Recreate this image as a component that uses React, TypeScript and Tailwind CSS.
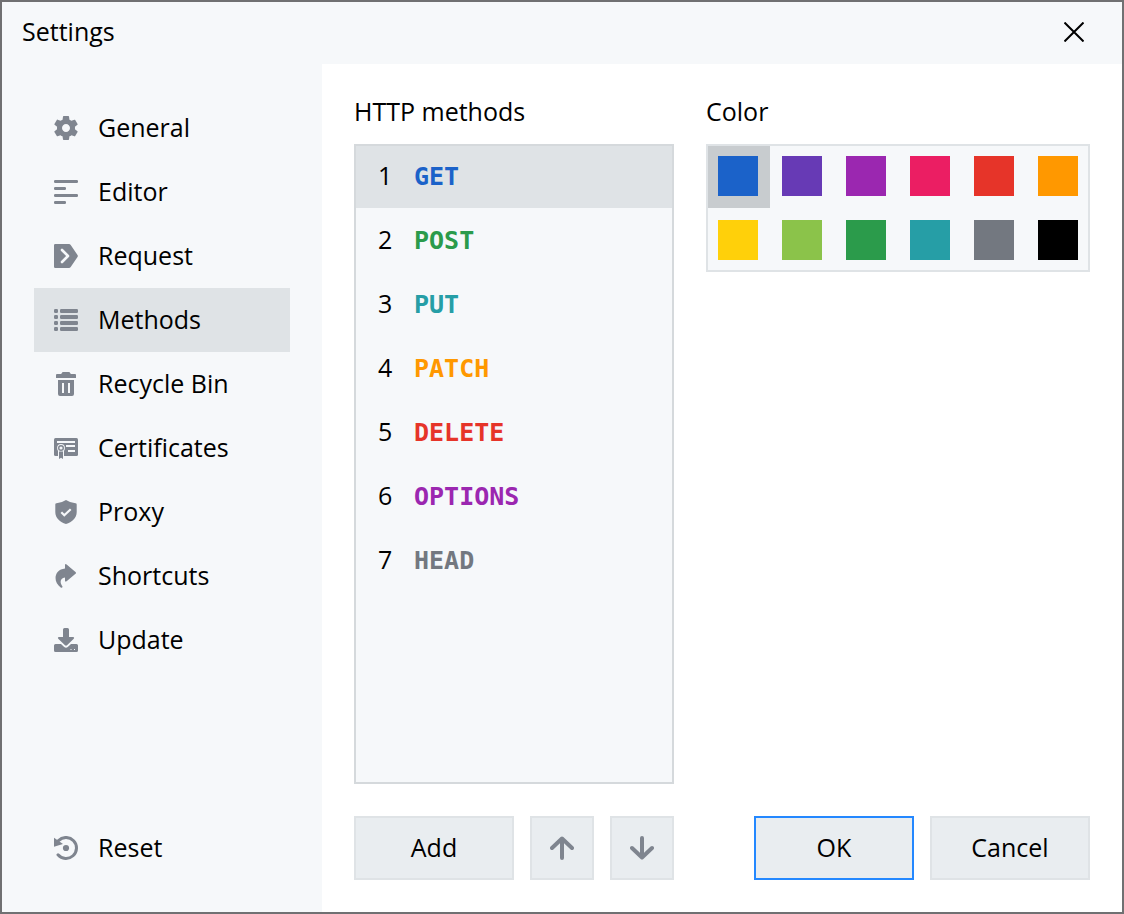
import { useState } from "react";
import type { ReactNode } from "react";

function Icon({ children }: { children: ReactNode }) {
  return (
    <svg aria-hidden="true" viewBox="0 0 24 24" className="size-6 shrink-0 text-[#7f858f]" fill="currentColor">
      {children}
    </svg>
  );
}

const icons: Record<string, ReactNode> = {
  General: (
    <g transform="scale(1.25) translate(-2.4 -2.4)">
      <path d="M19.14,12.94c0.04-0.3,0.06-0.61,0.06-0.94c0-0.32-0.02-0.64-0.07-0.94l2.03-1.58c0.18-0.14,0.23-0.41,0.12-0.61l-1.92-3.32c-0.12-0.22-0.37-0.29-0.59-0.22l-2.39,0.96c-0.5-0.38-1.03-0.7-1.62-0.94L14.4,2.81c-0.04-0.24-0.24-0.41-0.48-0.41h-3.84c-0.24,0-0.43,0.17-0.47,0.41L9.25,5.35C8.66,5.59,8.12,5.92,7.63,6.29L5.24,5.33c-0.22-0.08-0.47,0-0.59,0.22L2.74,8.87C2.62,9.08,2.66,9.34,2.86,9.48l2.03,1.58C4.84,11.36,4.8,11.69,4.8,12s0.02,0.64,0.07,0.94l-2.03,1.58c-0.18,0.14-0.23,0.41-0.12,0.61l1.92,3.32c0.12,0.22,0.37,0.29,0.59,0.22l2.39-0.96c0.5,0.38,1.03,0.7,1.62,0.94l0.36,2.54c0.05,0.24,0.24,0.41,0.48,0.41h3.84c0.24,0,0.44-0.17,0.47-0.41l0.36-2.54c0.59-0.24,1.13-0.56,1.62-0.94l2.39,0.96c0.22,0.08,0.47,0,0.59-0.22l1.92-3.32c0.12-0.22,0.07-0.47-0.12-0.61L19.14,12.94z M12,15.2c-1.77,0-3.2-1.43-3.2-3.2s1.43-3.2,3.2-3.2s3.2,1.43,3.2,3.2S13.77,15.2,12,15.2z" />
    </g>
  ),
  Editor: (
    <>
      <rect width="24" height="3" rx="1.2" />
      <rect y="7" width="12" height="3" rx="1.2" />
      <rect y="14" width="24" height="3" rx="1.2" />
      <rect y="21" width="12" height="3" rx="1.2" />
    </>
  ),
  Request: (
    <>
      <path d="M1.2 0H15q1 0 1.7.9L23.5 11q.7 1 0 2L16.7 23.1q-.7.9-1.7.9H1.2Q0 24 0 22.8V1.2Q0 0 1.2 0Z" />
      <path d="M8 6l6 6-6 6" fill="none" stroke="#f6f8fa" strokeWidth="2.6" strokeLinecap="round" strokeLinejoin="round" />
    </>
  ),
  Methods: (
    <>
      {[1, 7, 13, 19].map((y) => (
        <g key={y}>
          <rect y={y} width="4" height="4" rx="1.2" />
          <rect x="6" y={y} width="18" height="4" rx="1.2" />
        </g>
      ))}
    </>
  ),
  "Recycle Bin": (
    <path
      fillRule="evenodd"
      d="M9 0h6q1 0 1 1l1 1h4q1 0 1 1v3H2V3q0-1 1-1h4l1-1q0-1 1-1ZM4 8h16v14q0 2-2 2H6q-2 0-2-2ZM8 11v10h2V11ZM14 11v10h2V11Z"
    />
  ),
  Certificates: (
    <>
      <path d="M1.5 2h21Q24 2 24 3.5v15q0 1.5-1.500 1.500H1.500Q0 20 0 18.500v-15Q0 2 1.500 2Z" />
      <path d="M3 6h18M12 10h9M14 15h7" fill="none" stroke="#f6f8fa" strokeWidth="2" />
      <path d="M4 15h6v8H4Z" fill="#f6f8fa" />
      <circle cx="7" cy="12" r="3.900" fill="#f6f8fa" />
      <circle cx="7" cy="12" r="2.300" fill="none" stroke="currentColor" strokeWidth="1.400" />
      <path d="M5 15.500h4V23l-2-1.300L5 23Z" />
    </>
  ),
  Proxy: (
    <>
      <path d="M12 0q4.500 3 9.500 3.200 1.200.1 1.200 1.300V12c0 6-4.700 10-10.700 12C6 22 1.300 18 1.300 12V4.500q0-1.200 1.200-1.300Q7.500 3 12 0Z" />
      <path d="M7.300 12.300l3 3 6.400-6" fill="none" stroke="#f6f8fa" strokeWidth="2.200" />
    </>
  ),
  Shortcuts: (
    <path d="M11 0.500q.7-.8 1.600 0L21.500 8q1 1 0 1.800l-8.900 7.400q-1.600.9-1.600-.5V13.500C6 14 5.500 18.500 8.500 22.500q0 1.500-1.500 1.200C-1.500 18 0 5.500 11 4.500Z" />
  ),
  Update: (
    <>
      <path d="M9 1.500Q9 0 10.500 0h3Q15 0 15 1.500V9h4q2 .3.500 2L13 17.300q-1 .8-2 0L4.500 11Q3 9.300 5 9h4Z" />
      <path
        fillRule="evenodd"
        d="M1.500 16H7l3.200 3q1.800 1.500 3.600 0L17 16h5.500q1.500 0 1.500 1.500v5q0 1.500-1.500 1.500h-21Q0 24 0 22.500v-5Q0 16 1.500 16ZM16.500 21v1h1v-1ZM20 21v1h1v-1Z"
      />
    </>
  ),
  Reset: (
    <>
      <path d="M4.500 4.600A10.500 10.500 0 1 1 4 18.800" fill="none" stroke="currentColor" strokeWidth="3" strokeLinecap="round" />
      <path d="M0 1.800V10.800L9 8Z" />
      <circle cx="12" cy="12" r="3.100" />
    </>
  ),
};

const pages = ["General", "Editor", "Request", "Methods", "Recycle Bin", "Certificates", "Proxy", "Shortcuts", "Update"];

const methods = [
  { name: "GET", color: "text-[#1b62c9]" },
  { name: "POST", color: "text-[#2b9b4b]" },
  { name: "PUT", color: "text-[#269ea6]" },
  { name: "PATCH", color: "text-[#ff9800]" },
  { name: "DELETE", color: "text-[#e63429]" },
  { name: "OPTIONS", color: "text-[#9b27b0]" },
  { name: "HEAD", color: "text-[#737880]" },
];

const swatches = [
  { label: "Blue", color: "bg-[#1b62c9]" },
  { label: "Violet", color: "bg-[#673ab5]" },
  { label: "Purple", color: "bg-[#9b27b0]" },
  { label: "Pink", color: "bg-[#eb1e63]" },
  { label: "Red", color: "bg-[#e63429]" },
  { label: "Orange", color: "bg-[#ff9800]" },
  { label: "Yellow", color: "bg-[#ffd00a]" },
  { label: "Lime", color: "bg-[#8bc34a]" },
  { label: "Green", color: "bg-[#2b9b4b]" },
  { label: "Teal", color: "bg-[#269ea6]" },
  { label: "Gray", color: "bg-[#737880]" },
  { label: "Black", color: "bg-black" },
];

function NavButton({ label, active, onClick }: { label: string; active?: boolean; onClick?: () => void }) {
  return (
    <button
      type="button"
      onClick={onClick}
      className={`flex h-16 w-full items-center gap-5 px-5 text-left ${active ? "bg-[#dfe3e6]" : ""}`}
    >
      <Icon>{icons[label]}</Icon>
      <span className="pb-0.5">{label}</span>
    </button>
  );
}

const buttonBase = "flex h-16 items-center justify-center border-2 bg-[#e9edf0]";
const textButton = `${buttonBase} w-40 pb-0.5`;

export default function App() {
  const [page, setPage] = useState("Methods");
  const [method, setMethod] = useState(0);
  const [swatch, setSwatch] = useState(0);

  return (
    <div className="flex min-h-screen flex-col border-2 border-[#707072] bg-[#f6f8fa] font-['Open_Sans','Noto_Sans',sans-serif] text-[25px] leading-[30px] text-black">
      <header className="flex h-[62px] items-center justify-between pr-9 pb-0.5 pl-5">
        <h1 className="pb-0.5">Settings</h1>
        <button type="button" aria-label="Close" className="p-0.5">
          <svg aria-hidden="true" viewBox="0 0 20 20" className="size-5" fill="none" stroke="currentColor" strokeWidth="2">
            <path d="M.5.5l19 19M19.500.5l-19 19" />
          </svg>
        </button>
      </header>

      <div className="flex flex-1">
        <nav className="flex w-80 shrink-0 flex-col justify-between p-8">
          <div>
            {pages.map((p) => (
              <NavButton key={p} label={p} active={p === page} onClick={() => setPage(p)} />
            ))}
          </div>
          <NavButton label="Reset" />
        </nav>

        <main className="flex flex-1 flex-col gap-8 bg-white p-8">
          <div className="flex flex-1 gap-8">
            <section className="flex w-80 flex-col gap-4">
              <h2 className="pb-0.5">HTTP methods</h2>
              <ul className="flex-1 border-2 border-[#d5d9dc] bg-[#f6f8fa]">
                {methods.map((m, i) => (
                  <li key={m.name}>
                    <button
                      type="button"
                      onClick={() => setMethod(i)}
                      className={`flex w-full items-center px-[22px] text-left ${i === 0 ? "h-[62px] pb-0.5" : "h-16"} ${i === method ? "bg-[#dfe3e6]" : ""}`}
                    >
                      <span className="flex items-baseline gap-5">
                        <span className="w-4">{i + 1}</span>
                        <span className={`font-['DejaVu_Sans_Mono',monospace] font-bold ${m.color}`}>{m.name}</span>
                      </span>
                    </button>
                  </li>
                ))}
              </ul>
            </section>

            <section className="flex flex-1 flex-col gap-4">
              <h2 className="pb-0.5">Color</h2>
              <div className="grid grid-cols-[repeat(5,62px)_60px] grid-rows-[62px_60px] gap-0.5 border-2 border-[#dfe3e6] bg-[#f6f8fa]">
                {swatches.map((s, i) => (
                  <button
                    key={s.label}
                    type="button"
                    aria-label={s.label}
                    onClick={() => setSwatch(i)}
                    className={`flex items-start pt-2.5 pl-2.5 ${i === swatch ? "bg-[#c8cccf]" : ""}`}
                  >
                    <span className={`size-10 ${s.color}`} />
                  </button>
                ))}
              </div>
            </section>
          </div>

          <footer className="flex items-center justify-between">
            <div className="flex gap-4">
              <button type="button" className={`${textButton} border-[#dfe3e6]`}>Add</button>
              <button type="button" aria-label="Move up" className={`${buttonBase} w-16 border-[#dfe3e6]`}>
                <Icon>
                  <path d="M12 22V3M2 12L12 2.500l10 9.500" fill="none" stroke="currentColor" strokeWidth="4" strokeLinecap="round" strokeLinejoin="round" />
                </Icon>
              </button>
              <button type="button" aria-label="Move down" className={`${buttonBase} w-16 border-[#dfe3e6]`}>
                <Icon>
                  <path d="M12 2v19M2 12l10 9.500L22 12" fill="none" stroke="currentColor" strokeWidth="4" strokeLinecap="round" strokeLinejoin="round" />
                </Icon>
              </button>
            </div>
            <div className="flex gap-4">
              <button type="button" className={`${textButton} border-[#2488ff]`}>OK</button>
              <button type="button" className={`${textButton} border-[#dfe3e6]`}>Cancel</button>
            </div>
          </footer>
        </main>
      </div>
    </div>
  );
}
